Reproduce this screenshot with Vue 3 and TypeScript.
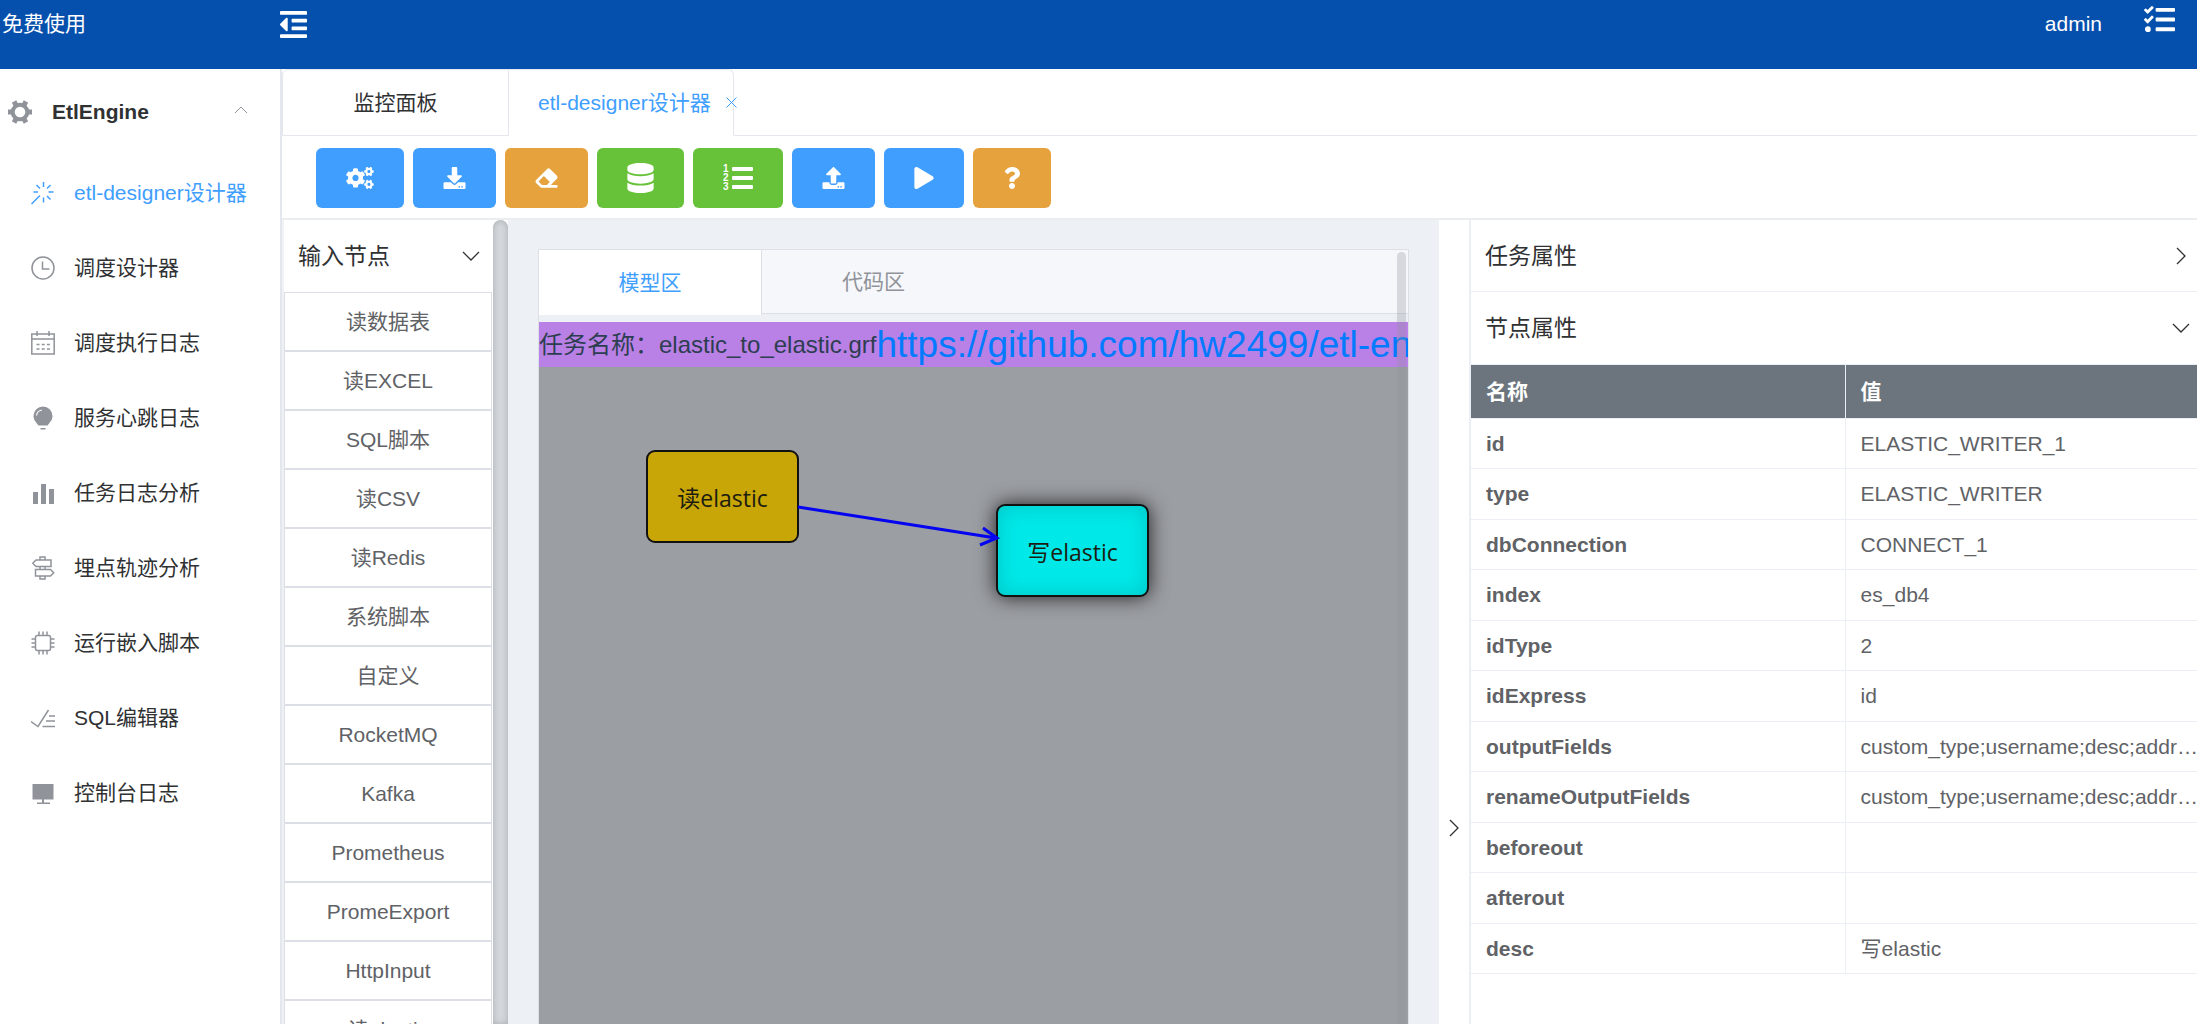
<script setup lang="ts">
import { ref } from 'vue'

interface MenuItem {
  label: string
  icon: string
}
interface Tool {
  name: string
  title: string
  kind: 'primary' | 'warning' | 'success'
  box: string
  width: number
  height: number
  path?: string
}
interface Property {
  name: string
  value: string
}

const menu: MenuItem[] = [
  { label: 'etl-designer设计器', icon: 'wand' },
  { label: '调度设计器', icon: 'clock' },
  { label: '调度执行日志', icon: 'calendar' },
  { label: '服务心跳日志', icon: 'bulb' },
  { label: '任务日志分析', icon: 'bars' },
  { label: '埋点轨迹分析', icon: 'guide' },
  { label: '运行嵌入脚本', icon: 'cpu' },
  { label: 'SQL编辑器', icon: 'finished' },
  { label: '控制台日志', icon: 'screen' },
]
const activeMenu = ref(menu[0].label)

const smallGear =
  'M512.1 191l-8.2 14.3c-3 5.3-9.4 7.5-15.1 5.4-11.8-4.4-22.6-10.7-32.1-18.6-4.6-3.8-5.8-10.5-2.8-15.7l8.2-14.3c-6.9-8-12.3-17.3-15.9-27.4h-16.5c-6 0-11.2-4.3-12.2-10.3-2-12-2.1-24.6 0-37.1 1-6 6.2-10.4 12.2-10.4h16.5c3.6-10.1 9-19.4 15.9-27.4l-8.2-14.3c-3-5.2-1.9-11.9 2.8-15.7 9.5-7.9 20.4-14.2 32.1-18.6 5.7-2.1 12.1.1 15.1 5.4l8.2 14.3c10.5-1.9 21.2-1.9 31.7 0L552 6.3c3-5.3 9.4-7.5 15.1-5.4 11.8 4.4 22.6 10.7 32.1 18.6 4.6 3.8 5.8 10.5 2.8 15.7l-8.2 14.3c6.9 8 12.3 17.3 15.9 27.4h16.5c6 0 11.2 4.3 12.2 10.3 2 12 2.1 24.6 0 37.1-1 6-6.2 10.4-12.2 10.4h-16.5c-3.6 10.1-9 19.4-15.9 27.4l8.2 14.3c3 5.2 1.9 11.9-2.8 15.7-9.5 7.9-20.4 14.2-32.1 18.6-5.7 2.1-12.1-.1-15.1-5.4l-8.2-14.3c-10.4 1.9-21.2 1.9-31.7 0zm-10.5-58.8c38.5 29.6 82.4-14.3 52.8-52.8-38.5-29.7-82.4 14.3-52.8 52.8z'
const largeGear =
  'M386.3 286.1l33.7 16.8c10.1 5.8 14.5 18.1 10.5 29.1-8.9 24.2-26.4 46.4-42.6 65.8-7.4 8.9-20.2 11.1-30.3 5.3l-29.1-16.8c-16 13.7-34.6 24.6-54.9 31.7v33.6c0 11.6-8.3 21.6-19.7 23.6-24.6 4.2-50.4 4.4-75.9 0-11.5-2-20-11.9-20-23.6V418c-20.3-7.2-38.9-18-54.9-31.7L74 403c-10 5.8-22.9 3.6-30.3-5.3-16.2-19.4-33.3-41.6-42.2-65.7-4-10.9.4-23.2 10.5-29.1l33.3-16.8c-3.9-20.9-3.9-42.4 0-63.4L12 205.8c-10.1-5.8-14.6-18.1-10.5-29 8.9-24.2 26-46.4 42.2-65.8 7.4-8.9 20.2-11.1 30.3-5.3l29.1 16.8c16-13.7 34.6-24.6 54.9-31.7V57.1c0-11.5 8.2-21.5 19.6-23.5 24.6-4.2 50.5-4.4 76-.1 11.5 2 20 11.9 20 23.6v33.6c20.3 7.2 38.9 18 54.9 31.7l29.1-16.8c10-5.8 22.9-3.6 30.3 5.3 16.2 19.4 33.2 41.6 42.1 65.8 4 10.9.1 23.2-10 29.1l-33.7 16.8c3.9 21 3.9 42.5 0 63.5zm-117.6 21.1c59.2-77-28.7-164.9-105.7-105.7-59.2 77 28.7 164.9 105.7 105.7z'

const tools: Tool[] = [
  { name: 'cogs', title: '设置', kind: 'primary', box: '0 0 640 512', width: 28, height: 22 },
  {
    name: 'download', title: '下载', kind: 'primary', box: '0 0 512 512', width: 23, height: 22,
    path: 'M216 0h80c13.3 0 24 10.7 24 24v168h87.7c17.8 0 26.7 21.5 14.1 34.1L269.7 378.3c-7.5 7.5-19.8 7.5-27.3 0L90.1 226.1c-12.6-12.6-3.7-34.1 14.1-34.1H192V24c0-13.3 10.7-24 24-24zm296 376v112c0 13.3-10.7 24-24 24H24c-13.3 0-24-10.7-24-24V376c0-13.3 10.7-24 24-24h146.7l49 49c20.1 20.1 52.5 20.1 72.6 0l49-49H488c13.3 0 24 10.7 24 24zm-124 88c0-11-9-20-20-20s-20 9-20 20 9 20 20 20 20-9 20-20zm64 0c0-11-9-20-20-20s-20 9-20 20 9 20 20 20 20-9 20-20z',
  },
  {
    name: 'eraser', title: '清空', kind: 'warning', box: '0 0 512 512', width: 23, height: 22,
    path: 'M497.941 273.941c18.745-18.745 18.745-49.137 0-67.882l-160-160c-18.745-18.745-49.136-18.746-67.883 0l-256 256c-18.745 18.745-18.745 49.137 0 67.882l96 96A48.004 48.004 0 0 0 144 480h356c6.627 0 12-5.373 12-12v-40c0-6.627-5.373-12-12-12H355.883l142.058-142.059zm-302.627-62.627l137.373 137.373L265.373 416H150.628l-80-80 124.686-124.686z',
  },
  {
    name: 'database', title: '数据源', kind: 'success', box: '0 0 448 512', width: 27, height: 30,
    path: 'M448 73.143v45.714C448 159.143 347.667 192 224 192S0 159.143 0 118.857V73.143C0 32.857 100.333 0 224 0s224 32.857 224 73.143zM448 176v102.857C448 319.143 347.667 352 224 352S0 319.143 0 278.857V176c48.125 33.143 136.208 48.572 224 48.572S399.874 209.143 448 176zm0 160v102.857C448 479.143 347.667 512 224 512S0 479.143 0 438.857V336c48.125 33.143 136.208 48.572 224 48.572S399.874 369.143 448 336z',
  },
  { name: 'list', title: '列表', kind: 'success', box: '0 0 30 30', width: 30, height: 30 },
  {
    name: 'upload', title: '上传', kind: 'primary', box: '0 0 512 512', width: 23, height: 22,
    path: 'M296 384h-80c-13.3 0-24-10.7-24-24V192h-87.7c-17.8 0-26.7-21.5-14.1-34.1L242.3 5.7c7.5-7.5 19.8-7.5 27.3 0l152.2 152.2c12.6 12.6 3.7 34.1-14.1 34.1H320v168c0 13.3-10.7 24-24 24zm216-8v112c0 13.3-10.7 24-24 24H24c-13.3 0-24-10.7-24-24V376c0-13.3 10.7-24 24-24h136v8c0 30.9 25.1 56 56 56h80c30.9 0 56-25.1 56-56v-8h136c13.3 0 24 10.7 24 24zm-124 88c0-11-9-20-20-20s-20 9-20 20 9 20 20 20 20-9 20-20zm64 0c0-11-9-20-20-20s-20 9-20 20 9 20 20 20 20-9 20-20z',
  },
  {
    name: 'play', title: '运行', kind: 'primary', box: '0 0 448 512', width: 20, height: 22,
    path: 'M424.4 214.7L72.4 6.6C43.8-10.3 0 6.1 0 47.9V464c0 37.5 40.7 60.1 72.4 41.3l352-208c31.4-18.5 31.5-64.1 0-82.6z',
  },
  {
    name: 'question', title: '帮助', kind: 'warning', box: '0 0 384 512', width: 18, height: 22,
    path: 'M202.021 0C122.202 0 70.503 32.703 29.914 91.026c-7.363 10.58-5.093 25.086 5.178 32.874l43.138 32.709c10.373 7.865 25.132 6.026 33.253-4.148 25.049-31.381 43.63-49.449 82.757-49.449 30.764 0 68.816 19.799 68.816 49.631 0 22.552-18.617 34.134-48.993 51.164-35.423 19.86-82.299 44.576-82.299 106.405V320c0 13.255 10.745 24 24 24h72.471c13.255 0 24-10.745 24-24v-5.773c0-42.86 125.268-44.645 125.268-160.627C377.504 66.256 286.902 0 202.021 0zM192 373.459c-38.196 0-69.271 31.075-69.271 69.271 0 38.195 31.075 69.27 69.271 69.27s69.271-31.075 69.271-69.271-31.075-69.27-69.271-69.27z',
  },
]

const inputNodes: string[] = [
  '读数据表', '读EXCEL', 'SQL脚本', '读CSV', '读Redis', '系统脚本', '自定义',
  'RocketMQ', 'Kafka', 'Prometheus', 'PromeExport', 'HttpInput', '读elastic',
]

const properties: Property[] = [
  { name: 'id', value: 'ELASTIC_WRITER_1' },
  { name: 'type', value: 'ELASTIC_WRITER' },
  { name: 'dbConnection', value: 'CONNECT_1' },
  { name: 'index', value: 'es_db4' },
  { name: 'idType', value: '2' },
  { name: 'idExpress', value: 'id' },
  { name: 'outputFields', value: 'custom_type;username;desc;addr…' },
  { name: 'renameOutputFields', value: 'custom_type;username;desc;addr…' },
  { name: 'beforeout', value: '' },
  { name: 'afterout', value: '' },
  { name: 'desc', value: '写elastic' },
]
</script>

<template>
  <div class="app">
    <header class="topbar">
      <span class="brand">免费使用</span>
      <button class="icon-btn" type="button" aria-label="收起菜单">
        <svg width="27" height="31" viewBox="0 0 448 512" fill="currentColor">
          <path d="M100.69 363.29c10 10 27.31 2.93 27.31-11.31V160c0-14.32-17.33-21.31-27.31-11.31l-96 96c-6.23 6.23-6.25 16.36 0 22.61zM432 416H16a16 16 0 0 0-16 16v32a16 16 0 0 0 16 16h416a16 16 0 0 0 16-16v-32a16 16 0 0 0-16-16zm3.17-128H204.83A12.82 12.82 0 0 0 192 300.83v38.34A12.82 12.82 0 0 0 204.83 352h230.34A12.82 12.82 0 0 0 448 339.17v-38.34A12.82 12.82 0 0 0 435.17 288zm0-128H204.83A12.82 12.82 0 0 0 192 172.83v38.34A12.82 12.82 0 0 0 204.83 224h230.34A12.82 12.82 0 0 0 448 211.17v-38.34A12.82 12.82 0 0 0 435.17 160zM432 32H16A16 16 0 0 0 0 48v32a16 16 0 0 0 16 16h416a16 16 0 0 0 16-16V48a16 16 0 0 0-16-16z" />
        </svg>
      </button>
      <span class="user">admin</span>
      <button class="icon-btn tasks" type="button" aria-label="任务">
        <svg width="31" height="31" viewBox="0 0 512 512" fill="currentColor">
          <path d="M139.61 35.5a12 12 0 0 0-17 0L58.93 98.81l-22.7-22.12a12 12 0 0 0-17 0L3.53 92.41a12 12 0 0 0 0 17l47.59 47.4a12.78 12.78 0 0 0 17.61 0l15.59-15.62L156.52 69a12.09 12.09 0 0 0 .09-17zm0 159.19a12 12 0 0 0-17 0l-63.68 63.72-22.7-22.1a12 12 0 0 0-17 0L3.53 252a12 12 0 0 0 0 17L51 316.5a12.77 12.77 0 0 0 17.6 0l15.7-15.69 72.2-72.22a12 12 0 0 0 .09-16.9zM64 368c-26.49 0-48.59 21.5-48.59 48S37.53 464 64 464a48 48 0 0 0 0-96zm432 16H208a16 16 0 0 0-16 16v32a16 16 0 0 0 16 16h288a16 16 0 0 0 16-16v-32a16 16 0 0 0-16-16zm0-320H208a16 16 0 0 0-16 16v32a16 16 0 0 0 16 16h288a16 16 0 0 0 16-16V80a16 16 0 0 0-16-16zm0 160H208a16 16 0 0 0-16 16v32a16 16 0 0 0 16 16h288a16 16 0 0 0 16-16v-32a16 16 0 0 0-16-16z" />
        </svg>
      </button>
    </header>

    <div class="body">
      <nav class="sidebar">
        <button class="group" type="button">
          <svg class="gear" width="26" height="26" viewBox="0 0 26 26" fill="none" stroke="currentColor">
            <circle cx="13" cy="13" r="7.3" stroke-width="4" />
            <path stroke-width="5" d="M1 13h4M21 13h4M7 2.6l2 3.5M19 23.4l-2-3.5M19 2.6l-2 3.5M7 23.4l2-3.5" />
          </svg>
          <span>EtlEngine</span>
          <svg class="fold" width="14" height="12" viewBox="0 0 14 12" fill="none" stroke="currentColor">
            <path d="M1 7l6-6 6 6" />
          </svg>
        </button>
        <a
          v-for="item in menu"
          :key="item.label"
          class="menu-item"
          :class="{ active: item.label === activeMenu }"
          href="#"
          @click.prevent="activeMenu = item.label"
        >
          <svg class="menu-icon" width="24" height="24" viewBox="0 0 24 24" fill="none" stroke="currentColor" stroke-width="1.5">
            <g v-if="item.icon === 'wand'">
              <path d="M.5 23L9 14.5M12.500 1v5M12.500 16.500v5M17.500 11h5M2.500 11H7M5.500 4L9 7.500M19.500 4L16 7.500M19.500 18.500L16 15" />
            </g>
            <g v-else-if="item.icon === 'clock'">
              <circle cx="12" cy="12" r="11" /><path d="M11.500 5.500V13h7" />
            </g>
            <g v-else-if="item.icon === 'calendar'">
              <path d="M.8 3h22.400v20H.8zM.8 8h22.400M6 0v5M18 0v5" />
              <path stroke-dasharray="3 2.2" d="M5.500 13.500H19M5.500 18H19" />
            </g>
            <g v-else-if="item.icon === 'bulb'">
              <path fill="currentColor" stroke="none" d="M12 .5a9.500 9.500 0 0 1 9.500 9.500c0 4.500-3 6.500-5 9.500h-9c-2-3-5-5-5-9.500A9.500 9.500 0 0 1 12 .5zM9.500 22h5v1.500h-5z" />
              <path stroke="#fff" stroke-width="1.2" d="M5.500 9.500A6.500 6.500 0 0 1 11 4" />
            </g>
            <g v-else-if="item.icon === 'bars'" fill="currentColor" stroke="none">
              <path d="M2 11h5v12H2zM10 3h5v20h-5zM18 8h5v15h-5z" />
            </g>
            <g v-else-if="item.icon === 'guide'">
              <path d="M5 4h15v6.500H5L1.800 7.300zM19.500 13.500h-15V20h15l3.200-3.200zM9 4V1h5v3M9 10.500v3M14 10.500v3M9 20v3h5v-3" />
            </g>
            <g v-else-if="item.icon === 'cpu'">
              <rect x="4.5" y="4.5" width="15" height="15" rx="2" />
              <path d="M8 .5v4M12 .5v4M16 .5v4M8 19.500v4M12 19.500v4M16 19.500v4M.5 8h4M.5 12h4M.5 16h4M19.500 8h4M19.500 12h4M19.500 16h4" />
            </g>
            <g v-else-if="item.icon === 'finished'">
              <path d="M0 15.500l7 5L17.500 4M18 10h6M15 15h9M11.500 20.500H24" />
            </g>
            <g v-else fill="currentColor" stroke="none">
              <path d="M1.500 3h21v15.500h-21zM11 18.500h2v3h-2zM6 21.500h13V23H6z" />
            </g>
          </svg>
          <span>{{ item.label }}</span>
        </a>
      </nav>

      <main class="main">
        <div class="tabs">
          <button class="tab" type="button">监控面板</button>
          <button class="tab current" type="button">
            <span>etl-designer设计器</span>
            <svg width="11" height="11" viewBox="0 0 11 11" fill="none" stroke="currentColor">
              <path d="M.5.5l10 10M10.500.5l-10 10" />
            </svg>
          </button>
          <div class="tabs-rest"></div>
        </div>

        <div class="toolbar">
          <button v-for="tool in tools" :key="tool.name" class="tool" :class="tool.kind" type="button" :aria-label="tool.title">
            <svg :width="tool.width" :height="tool.height" :viewBox="tool.box" fill="currentColor">
              <g v-if="tool.name === 'cogs'">
                <path :d="smallGear" />
                <path :d="smallGear" transform="translate(0 299)" />
                <path :d="largeGear" />
              </g>
              <g v-else-if="tool.name === 'list'">
                <rect x="9" y="4" width="21" height="4" rx="1" />
                <rect x="9" y="13" width="21" height="4" rx="1" />
                <rect x="9" y="22" width="21" height="4" rx="1" />
                <text class="digit" x="0" y="9">1</text>
                <text class="digit" x="0" y="18">2</text>
                <text class="digit" x="0" y="27">3</text>
              </g>
              <path v-else :d="tool.path" />
            </svg>
          </button>
        </div>

        <div class="workspace">
          <section class="palette">
            <button class="palette-head" type="button">
              <span>输入节点</span>
              <svg width="18" height="10" viewBox="0 0 18 10" fill="none" stroke="currentColor" stroke-width="1.3">
                <path d="M1 1l8 8 8-8" />
              </svg>
            </button>
            <button v-for="node in inputNodes" :key="node" class="palette-node" type="button">{{ node }}</button>
          </section>
          <div class="palette-scroll"></div>

          <section class="center">
            <div class="editor">
              <div class="editor-tabs">
                <button class="editor-tab on" type="button">模型区</button>
                <button class="editor-tab" type="button">代码区</button>
              </div>
              <div class="job">
                <span>任务名称：elastic_to_elastic.grf</span>
                <a href="https://github.com/hw2499/etl-engine">https://github.com/hw2499/etl-engine</a>
              </div>
              <div class="canvas">
                <div class="node reader">读elastic</div>
                <div class="node writer">写elastic</div>
                <svg class="wire" fill="none" stroke="#0404f0" stroke-width="3">
                  <path d="M259 140L457 171M444 161l14 10-17 7" />
                </svg>
              </div>
              <div class="editor-scroll"></div>
            </div>
          </section>

          <aside class="inspector">
            <button class="collapse" type="button" aria-label="收起属性">
              <svg width="10" height="18" viewBox="0 0 10 18" fill="none" stroke="currentColor" stroke-width="1.3">
                <path d="M1 1l8 8-8 8" />
              </svg>
            </button>
            <div class="panels">
              <button class="panel-head" type="button">
                <span>任务属性</span>
                <svg width="18" height="18" viewBox="0 0 18 18" fill="none" stroke="currentColor" stroke-width="1.3">
                  <path d="M5 1l8 8-8 8" />
                </svg>
              </button>
              <button class="panel-head" type="button">
                <span>节点属性</span>
                <svg width="18" height="18" viewBox="0 0 18 18" fill="none" stroke="currentColor" stroke-width="1.3">
                  <path d="M1 5l8 8 8-8" />
                </svg>
              </button>
              <table class="props">
                <thead>
                  <tr><th scope="col">名称</th><th scope="col">值</th></tr>
                </thead>
                <tbody>
                  <tr v-for="row in properties" :key="row.name">
                    <th scope="row">{{ row.name }}</th>
                    <td>{{ row.value }}</td>
                  </tr>
                </tbody>
              </table>
            </div>
          </aside>
        </div>
      </main>
    </div>
  </div>
</template>

<style>
body {
  margin: 0;
}
</style>

<style scoped>
.app {
  display: flex;
  flex-direction: column;
  height: 100vh;
  overflow: hidden;
  background: #fff;
  color: #303133;
  font-family: "Liberation Sans", "Noto Sans CJK SC", sans-serif;
  font-size: 21px;
  line-height: 30px;
}
.app * {
  box-sizing: border-box;
}
button {
  margin: 0;
  padding: 0;
  border: 0;
  background: none;
  color: inherit;
  font: inherit;
  cursor: pointer;
}
a {
  color: inherit;
  text-decoration: none;
}
svg {
  display: block;
  flex: none;
}

.topbar {
  display: flex;
  align-items: flex-start;
  flex: none;
  height: 69px;
  padding: 9px 22px 0 2px;
  background: #0650ad;
  color: #fff;
}
.brand {
  width: 278px;
}
.user {
  margin-left: auto;
  margin-right: 42px;
}
.tasks {
  margin-top: -5px;
}

.body {
  display: flex;
  flex: 1;
  min-height: 0;
}
.sidebar {
  flex: none;
  width: 282px;
  border-right: 2px solid #e4e7ed;
}
.group {
  display: flex;
  align-items: center;
  width: 100%;
  height: 86px;
  padding: 0 32px 0 7px;
  font-weight: 700;
  text-align: left;
}
.gear {
  margin-right: 19px;
  color: #909399;
}
.fold {
  margin-left: auto;
  color: #909399;
}
.menu-item {
  display: flex;
  align-items: center;
  gap: 19px;
  height: 75px;
  padding-left: 31px;
}
.menu-icon {
  color: #909399;
}
.menu-item.active,
.menu-item.active .menu-icon {
  color: #409eff;
}

.main {
  display: flex;
  flex-direction: column;
  flex: 1;
  min-width: 0;
}
.tabs {
  display: flex;
  flex: none;
  height: 67px;
}
.tab {
  width: 227px;
  border: 1px solid #e4e7ed;
  border-radius: 6px 0 0 0;
}
.tab.current {
  display: flex;
  align-items: center;
  gap: 15px;
  width: 225px;
  padding-left: 29px;
  border-bottom-color: transparent;
  border-left: 0;
  border-radius: 0 6px 0 0;
  color: #409eff;
  white-space: nowrap;
}
.tabs-rest {
  flex: 1;
  border-bottom: 1px solid #e4e7ed;
}
.toolbar {
  display: flex;
  flex: none;
  gap: 9px;
  padding: 12px 34px 10px;
}
.tool {
  display: flex;
  align-items: center;
  height: 60px;
  padding: 0 30px;
  border-radius: 6px;
  color: #fff;
}
.primary {
  background: #409eff;
}
.warning {
  background: #e6a23c;
}
.success {
  background: #67c23a;
}
.digit {
  font-size: 10px;
  font-weight: 700;
}

.workspace {
  display: flex;
  flex: 1;
  min-height: 0;
  border-top: 2px solid #ebeef0;
}
.palette {
  flex: none;
  width: 211px;
  padding-right: 1px;
  border-left: 2px solid #f0f1f4;
  overflow: hidden;
}
.palette-head {
  display: flex;
  align-items: center;
  justify-content: space-between;
  width: 100%;
  height: 72px;
  padding: 0 12px 0 14px;
  font-size: 23px;
}
.palette-node {
  display: block;
  width: 100%;
  height: 59px;
  border: 1px solid #dcdfe6;
  color: #606266;
}
.palette-scroll {
  flex: none;
  width: 15px;
  border-radius: 8px 8px 0 0;
  background: #d3d6da;
  box-shadow: inset 0 0 6px rgba(0, 0, 0, 0.2);
}

.center {
  display: flex;
  flex: 871 1 0;
  min-width: 0;
  padding: 29px 30px 0;
  background: #edf0f5;
}
.editor {
  position: relative;
  display: flex;
  flex-direction: column;
  flex: 1;
  min-width: 0;
  border: 1px solid #dcdfe6;
  border-bottom: 0;
}
.editor-tabs {
  display: flex;
  flex: none;
  height: 64px;
  margin-bottom: 8px;
  border-bottom: 1px solid #dcdfe6;
  background: #f5f7fb;
}
.editor-tab {
  width: 223px;
  height: 63px;
  color: #909399;
}
.editor-tab.on {
  height: 65px;
  border-right: 1px solid #dcdfe6;
  background: #fff;
  color: #409eff;
}
.job {
  display: flex;
  align-items: center;
  flex: none;
  height: 45px;
  overflow: hidden;
  background: #b980e6;
  color: #2c3e50;
  font-size: 24px;
  white-space: nowrap;
}
.job a {
  color: #007bff;
  font-size: 37px;
}
.canvas {
  position: relative;
  flex: 1;
  overflow: hidden;
  background: #9b9ea3;
}
.node {
  position: absolute;
  width: 153px;
  height: 93px;
  border: 2px solid #111;
  border-radius: 9px;
  color: #1c1c10;
  font-family: "Open Sans", "Noto Sans CJK SC", sans-serif;
  font-size: 23px;
  line-height: 93px;
  text-align: center;
}
.reader {
  left: 107px;
  top: 83px;
  background: #c8a608;
}
.writer {
  left: 457px;
  top: 137px;
  background: #00e8e8;
  box-shadow: 0 0 20px rgba(0, 0, 0, 0.8), inset 0 0 20px rgba(0, 60, 60, 0.2);
}
.wire {
  position: absolute;
  left: 0;
  top: 0;
  width: 100%;
  height: 100%;
}
.editor-scroll {
  position: absolute;
  top: 2px;
  right: 2px;
  bottom: 0;
  width: 9px;
  border-radius: 5px 5px 0 0;
  background: rgba(144, 147, 153, 0.3);
}

.inspector {
  display: flex;
  flex: 758 1 0;
  min-width: 0;
}
.collapse {
  display: flex;
  align-items: center;
  justify-content: center;
  flex: none;
  width: 30px;
  height: 100vh;
  margin-top: 96px;
}
.panels {
  flex: 1;
  min-width: 0;
  border-left: 2px solid #ebeef5;
}
.panel-head {
  display: flex;
  align-items: center;
  justify-content: space-between;
  width: 100%;
  height: 72px;
  padding: 0 7px 0 14px;
  border-bottom: 1px solid #ebeef5;
  font-size: 23px;
}
.panel-head + .panel-head {
  height: 73px;
}
.props {
  width: 100%;
  border-collapse: separate;
  border-spacing: 0;
  table-layout: fixed;
  color: #606266;
  text-align: left;
}
.props th,
.props td {
  height: 50px;
  padding: 0 0 0 15px;
  border-bottom: 1px solid #ebeef5;
  white-space: nowrap;
}
.props th {
  border-right: 1px solid #ebeef5;
  font-weight: 700;
}
.props th:first-child {
  width: 51.6%;
}
.props thead th {
  height: 54px;
  background: #6c757d;
  color: #fff;
}
.props thead th:last-child {
  border-right: 0;
}
.props tbody tr:nth-child(even) > * {
  height: 51px;
}
</style>
